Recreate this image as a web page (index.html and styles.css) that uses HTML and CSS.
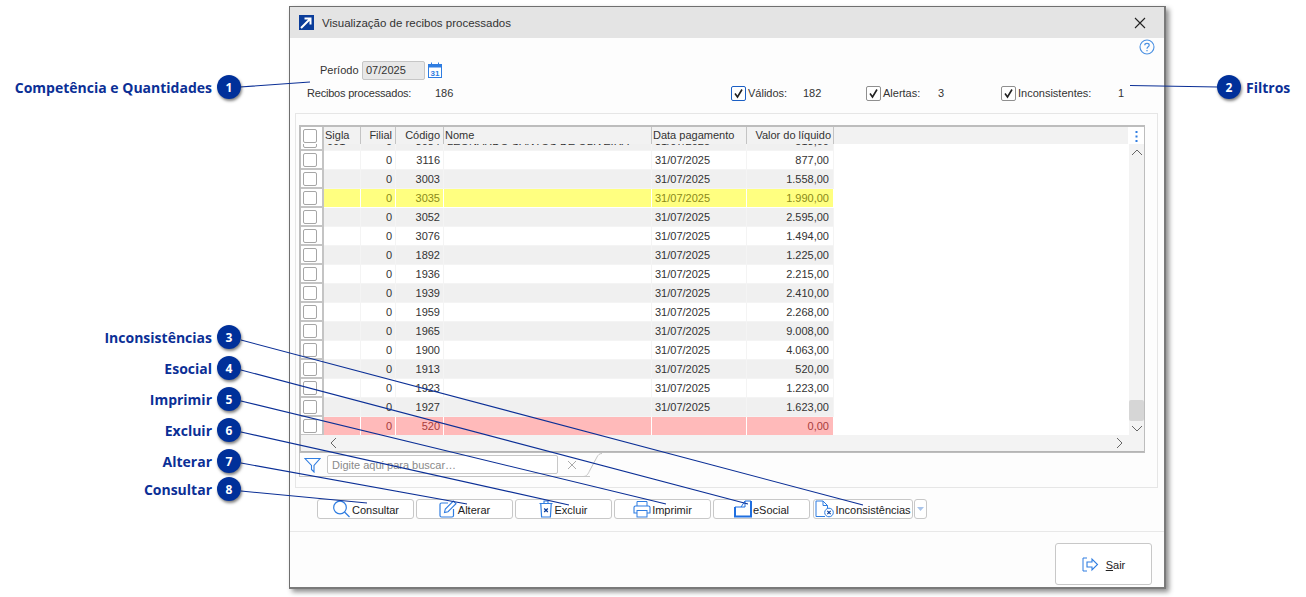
FILE: index.html
```html
<!DOCTYPE html>
<html lang="pt-BR">
<head>
<meta charset="utf-8">
<title>Visualização de recibos processados</title>
<link rel="stylesheet" href="styles.css">
</head>
<body>
<main class="window">
  <header class="titlebar">
    <svg class="app-icon" width="15" height="15" viewBox="0 0 15 15"><rect width="15" height="15" fill="#0b3d9a"/><path d="M2 13 L11 4 M5.5 3.5 H11.5 V9.5" fill="none" stroke="#fff" stroke-width="2"/></svg>
    <span class="title">Visualização de recibos processados</span>
    <svg class="close" width="12" height="12" viewBox="0 0 12 12"><path d="M1 1 L11 11 M11 1 L1 11" stroke="#222" stroke-width="1.1"/></svg>
  </header>
  <div class="body">
    <div class="help-row">
      <svg width="16" height="16" viewBox="0 0 16 16"><circle cx="8" cy="8" r="7" fill="none" stroke="#4a90e2" stroke-width="1.1"/><path d="M5.8 6.2 C5.8 3.8 10.2 3.8 10.2 6.2 C10.2 7.9 8 7.8 8 9.8 M8 11 V12.2" fill="none" stroke="#4a90e2" stroke-width="1.2"/></svg>
    </div>
    <div class="period-row">
      <span class="period-label">Período</span>
      <span class="period-input">07/2025</span>
      <svg class="cal" width="14" height="16" viewBox="0 0 14 16"><rect x="0.5" y="2.5" width="13" height="13" fill="#fff" stroke="#2f7de1"/><rect x="0.5" y="2.5" width="13" height="3" fill="#2f7de1"/><path d="M3.5 0.5 V3 M10.5 0.5 V3" stroke="#2f7de1"/><text x="7" y="14" class="cal-text" text-anchor="middle">31</text></svg>
    </div>
    <div class="count-row">
      <div class="total"><span class="total-label">Recibos processados:</span><span>186</span></div>
      <label class="check focus"><span class="box"><svg width="11" height="11" viewBox="0 0 11 11"><path d="M2 5.5 L4.5 9 L9 1.5" fill="none" stroke="#222" stroke-width="1.6"/></svg></span><span class="check-label l1">Válidos:</span><span>182</span></label>
      <label class="check c2"><span class="box"><svg width="11" height="11" viewBox="0 0 11 11"><path d="M2 5.5 L4.5 9 L9 1.5" fill="none" stroke="#222" stroke-width="1.6"/></svg></span><span class="check-label l2">Alertas:</span><span>3</span></label>
      <label class="check c3"><span class="box"><svg width="11" height="11" viewBox="0 0 11 11"><path d="M2 5.5 L4.5 9 L9 1.5" fill="none" stroke="#222" stroke-width="1.6"/></svg></span><span class="check-label l3">Inconsistentes:</span><span>1</span></label>
    </div>
    <section class="panel">
      <div class="grid">
        <div class="grid-top">
          <div class="head row-cols">
            <div class="cb-cell"><span class="cb"></span></div>
            <div class="c sigla">Sigla</div><div class="c filial r">Filial</div><div class="c cod r">Código</div><div class="c nome">Nome</div><div class="c data">Data pagamento</div><div class="c val r">Valor do líquido</div>
          </div>
          <div class="head-rest"><svg width="3" height="13" viewBox="0 0 3 13"><path d="M1.5 1 V3 M1.5 5.5 V7.5 M1.5 10 V12" stroke="#2f7de1" stroke-width="2"/></svg></div>
        </div>
        <div class="grid-mid">
          <div class="rows">
            <div class="row row-cols alt clip"><div class="cb-cell"><span class="cb"></span></div><div class="c sigla">001</div><div class="c filial r">0</div><div class="c cod r">3084</div><div class="c nome">LEONARDO SANTOS DE OLIVEIRA</div><div class="c data">31/07/2025</div><div class="c val r">513,00</div></div>
            <div class="row row-cols"><div class="cb-cell"><span class="cb"></span></div><div class="c sigla"></div><div class="c filial r">0</div><div class="c cod r">3116</div><div class="c nome"></div><div class="c data">31/07/2025</div><div class="c val r">877,00</div></div>
            <div class="row row-cols alt"><div class="cb-cell"><span class="cb"></span></div><div class="c sigla"></div><div class="c filial r">0</div><div class="c cod r">3003</div><div class="c nome"></div><div class="c data">31/07/2025</div><div class="c val r">1.558,00</div></div>
            <div class="row row-cols warn"><div class="cb-cell"><span class="cb"></span></div><div class="c sigla"></div><div class="c filial r">0</div><div class="c cod r">3035</div><div class="c nome"></div><div class="c data">31/07/2025</div><div class="c val r">1.990,00</div></div>
            <div class="row row-cols alt"><div class="cb-cell"><span class="cb"></span></div><div class="c sigla"></div><div class="c filial r">0</div><div class="c cod r">3052</div><div class="c nome"></div><div class="c data">31/07/2025</div><div class="c val r">2.595,00</div></div>
            <div class="row row-cols"><div class="cb-cell"><span class="cb"></span></div><div class="c sigla"></div><div class="c filial r">0</div><div class="c cod r">3076</div><div class="c nome"></div><div class="c data">31/07/2025</div><div class="c val r">1.494,00</div></div>
            <div class="row row-cols alt"><div class="cb-cell"><span class="cb"></span></div><div class="c sigla"></div><div class="c filial r">0</div><div class="c cod r">1892</div><div class="c nome"></div><div class="c data">31/07/2025</div><div class="c val r">1.225,00</div></div>
            <div class="row row-cols"><div class="cb-cell"><span class="cb"></span></div><div class="c sigla"></div><div class="c filial r">0</div><div class="c cod r">1936</div><div class="c nome"></div><div class="c data">31/07/2025</div><div class="c val r">2.215,00</div></div>
            <div class="row row-cols alt"><div class="cb-cell"><span class="cb"></span></div><div class="c sigla"></div><div class="c filial r">0</div><div class="c cod r">1939</div><div class="c nome"></div><div class="c data">31/07/2025</div><div class="c val r">2.410,00</div></div>
            <div class="row row-cols"><div class="cb-cell"><span class="cb"></span></div><div class="c sigla"></div><div class="c filial r">0</div><div class="c cod r">1959</div><div class="c nome"></div><div class="c data">31/07/2025</div><div class="c val r">2.268,00</div></div>
            <div class="row row-cols alt"><div class="cb-cell"><span class="cb"></span></div><div class="c sigla"></div><div class="c filial r">0</div><div class="c cod r">1965</div><div class="c nome"></div><div class="c data">31/07/2025</div><div class="c val r">9.008,00</div></div>
            <div class="row row-cols"><div class="cb-cell"><span class="cb"></span></div><div class="c sigla"></div><div class="c filial r">0</div><div class="c cod r">1900</div><div class="c nome"></div><div class="c data">31/07/2025</div><div class="c val r">4.063,00</div></div>
            <div class="row row-cols alt"><div class="cb-cell"><span class="cb"></span></div><div class="c sigla"></div><div class="c filial r">0</div><div class="c cod r">1913</div><div class="c nome"></div><div class="c data">31/07/2025</div><div class="c val r">520,00</div></div>
            <div class="row row-cols"><div class="cb-cell"><span class="cb"></span></div><div class="c sigla"></div><div class="c filial r">0</div><div class="c cod r">1923</div><div class="c nome"></div><div class="c data">31/07/2025</div><div class="c val r">1.223,00</div></div>
            <div class="row row-cols alt"><div class="cb-cell"><span class="cb"></span></div><div class="c sigla"></div><div class="c filial r">0</div><div class="c cod r">1927</div><div class="c nome"></div><div class="c data">31/07/2025</div><div class="c val r">1.623,00</div></div>
            <div class="row row-cols err"><div class="cb-cell"><span class="cb"></span></div><div class="c sigla"></div><div class="c filial r">0</div><div class="c cod r">520</div><div class="c nome"></div><div class="c data"></div><div class="c val r">0,00</div></div>
          </div>
          <div class="vscroll">
            <svg width="12" height="7" viewBox="0 0 12 7"><path d="M1 6 L6 1 L11 6" fill="none" stroke="#666"/></svg>
            <span class="thumb"></span>
            <svg width="12" height="7" viewBox="0 0 12 7"><path d="M1 1 L6 6 L11 1" fill="none" stroke="#666"/></svg>
          </div>
        </div>
        <div class="hscroll">
          <svg width="7" height="12" viewBox="0 0 7 12"><path d="M6 1 L1 6 L6 11" fill="none" stroke="#666"/></svg>
          <svg width="7" height="12" viewBox="0 0 7 12"><path d="M1 1 L6 6 L1 11" fill="none" stroke="#666"/></svg>
        </div>
      </div>
      <div class="filter">
        <svg class="funnel" width="17" height="16" viewBox="0 0 17 16"><path d="M1 1.5 H16 L10 8.5 V15 L7.5 12.5 V8.5 Z" fill="none" stroke="#2f7de1" stroke-width="1.1"/></svg>
        <span class="search">Digite aqui para buscar…</span>
        <svg class="clear" width="10" height="10" viewBox="0 0 10 10"><path d="M1 1 L9 9 M9 1 L1 9" stroke="#aaa"/></svg>
        <svg class="tab-end" width="22" height="24" viewBox="0 0 22 24"><path d="M0 23.5 H3 C7 23.5 8 21 10 17 L17 4 C18 2 19.5 0.5 22 0.5" fill="none" stroke="#c4c4c4"/></svg>
      </div>
    </section>
    <div class="actions">
      <button class="btn" type="button"><svg width="19" height="18" viewBox="0 0 19 18"><circle cx="8" cy="7.5" r="6.3" fill="none" stroke="#2f7de1" stroke-width="1.2"/><path d="M12.5 12 L17.5 17" stroke="#2f7de1" stroke-width="1.3"/></svg><span>Consultar</span></button>
      <button class="btn" type="button"><svg width="18" height="18" viewBox="0 0 18 18"><path d="M9 3 H2.5 C1.5 3 1 3.5 1 4.5 V15.5 C1 16.5 1.5 17 2.5 17 H13 C14 17 14.5 16.5 14.5 15.5 V9" fill="none" stroke="#2f7de1" stroke-width="1.2"/><path d="M5.5 12.5 L6.3 9 L14.3 1 L17 3.7 L9 11.7 Z" fill="none" stroke="#2f7de1" stroke-width="1.1"/></svg><span>Alterar</span></button>
      <button class="btn" type="button"><svg width="14" height="18" viewBox="0 0 14 18"><path d="M0.5 3.5 H13.5 M5 3 V1 H9 V3" fill="none" stroke="#2f7de1" stroke-width="1.1"/><path d="M1.8 4 L2.6 17 H11.4 L12.2 4" fill="none" stroke="#2f7de1" stroke-width="1.2"/><path d="M5.2 8.5 L8.8 12 M8.8 8.5 L5.2 12" stroke="#0b3d9a" stroke-width="1.3"/></svg><span>Excluir</span></button>
      <button class="btn" type="button"><svg width="18" height="18" viewBox="0 0 18 18"><path d="M4 6 V1.5 H14 V6" fill="none" stroke="#2f7de1"/><path d="M4 13 H1 V7.5 C1 6.5 1.5 6 2.5 6 H15.5 C16.5 6 17 6.5 17 7.5 V13 H14" fill="none" stroke="#2f7de1" stroke-width="1.1"/><rect x="4" y="10.5" width="10" height="6.5" fill="none" stroke="#2f7de1"/></svg><span>Imprimir</span></button>
      <button class="btn" type="button"><svg width="18" height="18" viewBox="0 0 18 18"><path d="M1 7 V16.5 H17 V1" fill="none" stroke="#1f6fe0" stroke-width="2"/><path d="M1 7 H7 L11 1 H17 M11 1 V7 H7" fill="none" stroke="#1f6fe0"/></svg><span>eSocial</span></button>
      <button class="btn wide" type="button"><svg width="19" height="18" viewBox="0 0 19 18"><path d="M10 16.5 H1 V1 H8 L12.5 5.5 V8.5 M8 1 V5.5 H12.5" fill="none" stroke="#2f7de1"/><circle cx="14" cy="12.5" r="4.3" fill="none" stroke="#2f7de1"/><path d="M12.3 10.8 L15.7 14.2 M15.7 10.8 L12.3 14.2" stroke="#0b3d9a" stroke-width="1.1"/></svg><span>Inconsistências</span></button>
      <button class="btn more" type="button"><svg width="7" height="4" viewBox="0 0 7 4"><path d="M0 0 H7 L3.5 4 Z" fill="#a9c4ea"/></svg></button>
    </div>
    <footer class="footer">
      <button class="btn exit" type="button"><svg width="17" height="15" viewBox="0 0 17 15"><path d="M5 1 H1 V14 H5" fill="none" stroke="#2f7de1"/><path d="M5 5 H10 V2 L15.5 7.5 L10 13 V10 H5 Z" fill="none" stroke="#2f7de1" stroke-width="1.1"/></svg><span><u>S</u>air</span></button>
    </footer>
  </div>
</main>

<svg class="leaders" width="1306" height="597" viewBox="0 0 1306 597">
  <path d="M240 87 L310 82 M1130 85.5 L1218 87 M241 340 L863 505 M241 370 L748 504 M241 401 L666 504 M241 432 L569 505 M241 463 L467 504 M241 491 L367 503" fill="none" stroke="#0b2f96" stroke-width="1.1"/>
</svg>
<div class="callout c-1"><span class="call-text">Competência e Quantidades</span><span class="badge">1</span></div>
<div class="callout c-2"><span class="badge">2</span><span class="call-text">Filtros</span></div>
<div class="callout c-3"><span class="call-text">Inconsistências</span><span class="badge">3</span></div>
<div class="callout c-4"><span class="call-text">Esocial</span><span class="badge">4</span></div>
<div class="callout c-5"><span class="call-text">Imprimir</span><span class="badge">5</span></div>
<div class="callout c-6"><span class="call-text">Excluir</span><span class="badge">6</span></div>
<div class="callout c-7"><span class="call-text">Alterar</span><span class="badge">7</span></div>
<div class="callout c-8"><span class="call-text">Consultar</span><span class="badge">8</span></div>
</body>
</html>
```
FILE: styles.css
```css
* { box-sizing: border-box; }
html, body { margin: 0; padding: 0; }
body {
  position: relative;
  width: 1306px;
  height: 597px;
  overflow: hidden;
  background: #fff;
  font-family: "Liberation Sans", Arial, sans-serif;
  font-size: 11px;
  color: #333;
}

/* dialog window, placed on the free canvas of the screenshot */
.window {
  position: absolute;
  left: 289px;
  top: 6px;
  width: 877px;
  height: 583px;
  display: flex;
  flex-direction: column;
  background: #fdfdfd;
  border: 1px solid #6f6f6f;
  border-right: 2px solid #7a7a7a;
  border-bottom: 2px solid #7a7a7a;
  box-shadow: 3px 3px 5px rgba(0, 0, 0, .45);
}
.titlebar {
  height: 31px;
  flex: none;
  display: flex;
  align-items: center;
  padding: 0 18px 0 9px;
  background: #e4e4e4;
}
.title { margin-left: 8px; font-size: 11.5px; color: #333; }
.close { margin-left: auto; }

.body { flex: 1; display: flex; flex-direction: column; min-height: 0; }
.help-row { height: 19px; display: flex; justify-content: flex-end; padding: 1px 9px 0 0; flex: none; }
.period-row { height: 26px; flex: none; display: flex; align-items: center; padding-left: 30px; }
.period-label { width: 42px; }
.period-input {
  width: 63px; height: 19px; display: flex; align-items: center;
  padding-left: 3px;
  background: #e8e8e8; border: 1px solid #c6c6c6; border-radius: 2px;
}
.cal { margin-left: 3px; }
.cal-text { font: bold 8px "Liberation Sans", sans-serif; fill: #2f7de1; }

.count-row { height: 20px; flex: none; display: flex; align-items: center; position: relative; padding-left: 17px; }
.total { width: 424px; display: flex; }
.total-label { width: 128px; letter-spacing: -.2px; }
.check { display: flex; align-items: center; }
.box {
  width: 15px; height: 15px; margin-right: 2px;
  display: flex; align-items: center; justify-content: center;
  background: #fff; border: 1px solid #8f8f8f; border-radius: 2px;
}
.focus .box { border-color: #1b5fc4; border-width: 1.5px; }
.check-label { display: block; }
.l1 { width: 55px; }
.l2 { width: 55px; }
.l3 { width: 100px; }
.focus { width: 135px; }
.c2 { width: 135px; }

.panel {
  height: 375px;
  flex: none;
  margin: 10px 6px 0 5px;
  padding: 11px 12px 0 3px;
  border: 1px solid #e6e6e6;
}
.grid { height: 328px; border: 2px solid #bdbdbd; border-bottom-width: 1px; border-right-width: 1px; display: flex; flex-direction: column; background: #fff; }
.grid-top { height: 17px; display: flex; flex: none; }
.row-cols { display: grid; grid-template-columns: 23px 37px 35px 48px 208px 95px 87px; }
.head { background: #f2f2f2; height: 17px; width: 533px; flex: none; }
.head .c { line-height: 16px; border-right: 1px solid #c4c4c4; color: #333; padding: 0 1px; white-space: nowrap; }
.head .r { padding-right: 3px; }
.head .val { padding-right: 2px; }
.head .cb-cell { border-bottom: none; }
.head-rest { flex: 1; display: flex; justify-content: flex-end; padding: 3px 6px 0 0; background: linear-gradient(to right, #f2f2f2 calc(100% - 16px), #fff calc(100% - 16px)); }

.grid-mid { flex: 1; display: flex; min-height: 0; }
.rows { flex: 1; overflow: hidden; }
.row { height: 19px; width: 533px; background: #fff; }
.row.clip { margin-top: -12px; }
.row .c { line-height: 19px; padding: 0 3px; border-right: 1px solid #f4f4f4; border-bottom: 1px solid #f4f4f4; white-space: nowrap; overflow: hidden; }
.row .val { padding-right: 4px; }
.row.alt { background: #f0f0f0; }
.row.warn { background: #ffff80; color: #8a8a18; }
.row.err { background: #ffbaba; color: #a83c3c; }
.row.err .c, .row.warn .c { border-color: #fff; }
.r { text-align: right; }
.cb-cell {
  display: flex; align-items: center; justify-content: flex-start;
  padding-left: 2px;
  background: #fff;
  border-right: 2px solid #c4c4c4;
  border-bottom: 2px solid #c4c4c4;
}
.cb { width: 14px; height: 14px; border: 1px solid #a6a6a6; border-radius: 2px; background: #fff; }

.vscroll { width: 15px; flex: none; display: flex; flex-direction: column; align-items: center; background: #f3f3f3; padding: 5px 0 3px; }
.thumb { width: 15px; height: 21px; margin-top: auto; margin-bottom: 4px; background: #d6d6d6; border-radius: 2px; }
.hscroll { height: 17px; flex: none; display: flex; justify-content: space-between; align-items: center; background: #f3f3f3; padding: 0 21px 0 29px; border-bottom: 1px solid #b5b5b5; }

.filter {
  position: relative;
  height: 24px;
  width: 291px;
  display: flex;
  align-items: center;
  padding-left: 4px;
  border-left: 1px solid #c4c4c4;
  border-bottom: 1px solid #c4c4c4;
}
.search {
  width: 231px; height: 19px; margin-left: 6px; padding-left: 4px;
  display: flex; align-items: center;
  background: #fff; border: 1px solid #c8c8c8; border-radius: 2px;
  color: #8a8a8a;
}
.clear { margin-left: 9px; }
.tab-end { position: absolute; left: 280px; top: 0; }

.actions { height: 44px; flex: none; display: flex; padding: 11px 0 0 27px; gap: 2px; border-bottom: 1px solid #e8e8e8; }
.btn {
  width: 97px; height: 20px; padding: 0;
  display: flex; align-items: center; justify-content: center; gap: 1px;
  background: #fff;
  border: 1px solid #c8c8c8; border-radius: 3px;
  font: 11px "Liberation Sans", Arial, sans-serif; color: #222;
}
.btn span { padding-top: 2px; }
.wide { width: 100px; margin-left: 1px; }
.more { width: 13px; margin-left: -1px; }
.footer { flex: 1; display: flex; justify-content: flex-end; padding: 11px 12px 0 0; }
.exit { width: 97px; height: 42px; gap: 7px; }

/* annotation layer over the screenshot */
.leaders { position: absolute; left: 0; top: 0; pointer-events: none; }
.callout { position: absolute; display: flex; align-items: center; gap: 5px; height: 24px; font-family: "Open Sans", sans-serif; }
.call-text { font-weight: 700; font-size: 14px; color: #0b2f96; white-space: nowrap; }
.badge {
  width: 24px; height: 24px; flex: none; border-radius: 50%;
  display: flex; align-items: center; justify-content: center;
  background: #00309a; color: #fff; font-weight: 700; font-size: 12px;
  box-shadow: 1px 2px 3px rgba(0, 0, 0, .5);
}
.c-1, .c-3, .c-4, .c-5, .c-6, .c-7, .c-8 { right: 1065px; }
.c-1 { top: 75px; }
.c-2 { left: 1217px; top: 75px; }
.c-3 { top: 325px; }
.c-4 { top: 356px; }
.c-5 { top: 387px; }
.c-6 { top: 418px; }
.c-7 { top: 449px; }
.c-8 { top: 477px; }
```
